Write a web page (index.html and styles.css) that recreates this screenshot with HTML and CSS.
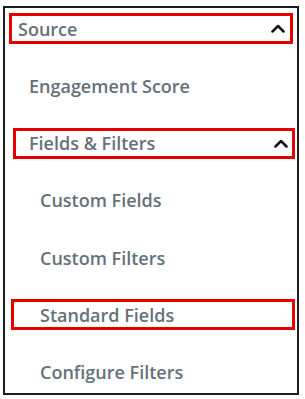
FILE: index.html
```html
<!DOCTYPE html>
<html>
<head>
<meta charset="utf-8">
<link rel="stylesheet" href="styles.css">
</head>
<body>
<div class="panel">
  <div class="row top hl">
    <span class="label">Source</span>
    <svg class="chev" width="14" height="9" viewBox="0 0 14 9"><path d="M1.5 7.5 L7 2 L12.5 7.5" fill="none" stroke="#111" stroke-width="2.5" stroke-linecap="round" stroke-linejoin="round"/></svg>
  </div>
  <div class="row lvl1">
    <span class="label">Engagement Score</span>
  </div>
  <div class="row lvl1 hl">
    <span class="label">Fields &amp; Filters</span>
    <svg class="chev" width="14" height="9" viewBox="0 0 14 9"><path d="M1.5 7.5 L7 2 L12.5 7.5" fill="none" stroke="#111" stroke-width="2.5" stroke-linecap="round" stroke-linejoin="round"/></svg>
  </div>
  <div class="row lvl2">
    <span class="label">Custom Fields</span>
  </div>
  <div class="row lvl2">
    <span class="label">Custom Filters</span>
  </div>
  <div class="row lvl2 hl">
    <span class="label">Standard Fields</span>
  </div>
  <div class="row lvl2">
    <span class="label">Configure Filters</span>
  </div>
</div>
</body>
</html>
```
FILE: styles.css
```css
html, body {
  margin: 0;
  padding: 0;
  background: #ffffff;
}
body {
  font-family: "Open Sans", "Liberation Sans", sans-serif;
}
.panel {
  box-sizing: border-box;
  margin: 6px 0 0 3px;
  width: 296px;
  height: 389px;
  border: 2px solid #1c1c1c;
  padding: 5px 0 0 0;
  display: flex;
  flex-direction: column;
  gap: 26.3px;
}
.row {
  box-sizing: border-box;
  height: 31px;
  display: flex;
  align-items: center;
  justify-content: space-between;
  border: 3px solid transparent;
}
.label {
  font-size: 18px;
  font-weight: 600;
  color: #65717a;
  line-height: 1;
  white-space: nowrap;
}
.top {
  margin-left: 4px;
  margin-right: 4px;
  padding-left: 6px;
  padding-right: 5px;
}
.lvl1 {
  margin-left: 8px;
  margin-right: 2px;
  padding-left: 13px;
  padding-right: 4px;
}
.lvl2 {
  margin-left: 6px;
  margin-right: 2px;
  padding-left: 26px;
}
.hl {
  border-color: #e60000;
}
.chev {
  display: block;
}
```
